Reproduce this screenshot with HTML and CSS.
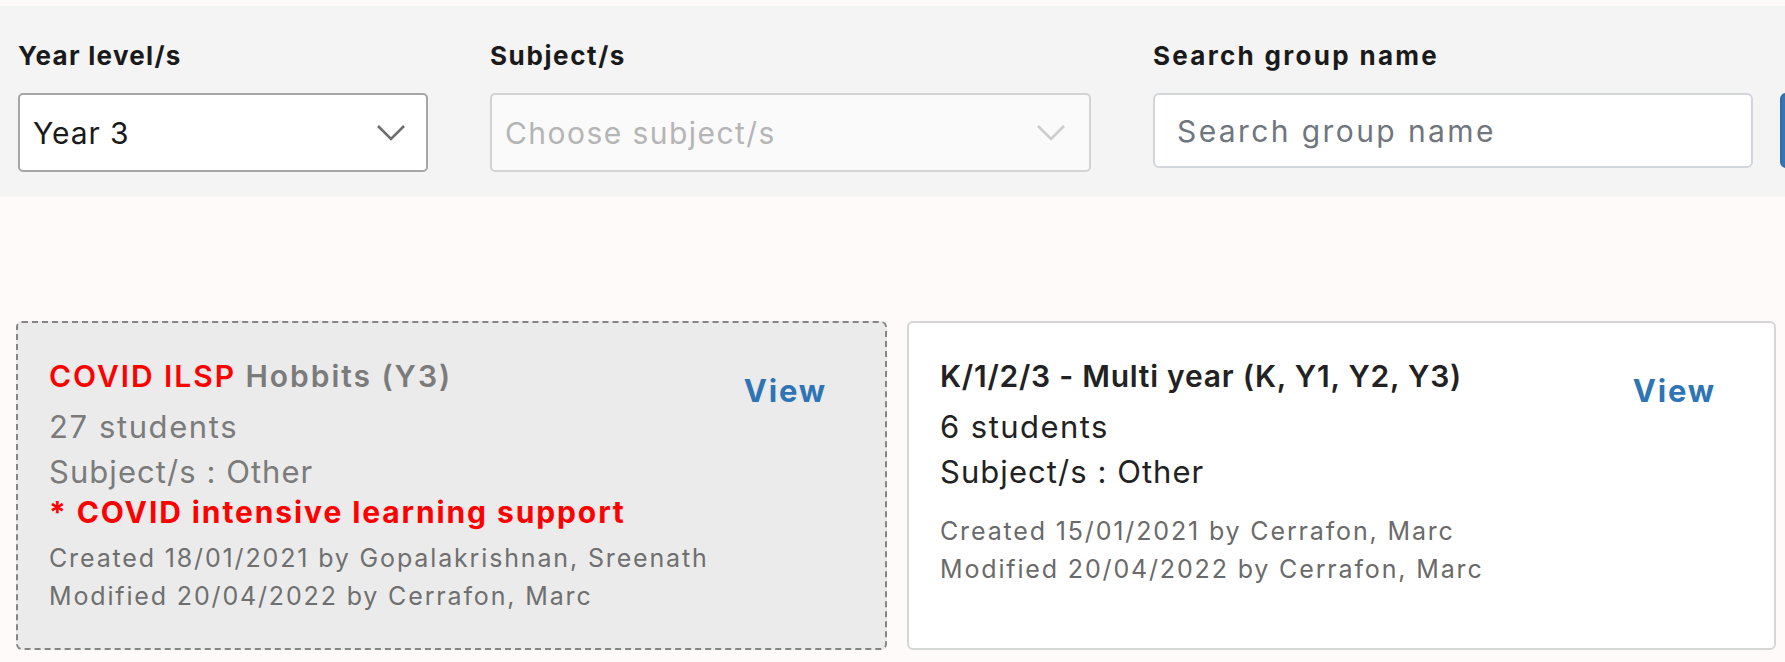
FILE: index.html
```html
<!DOCTYPE html>
<html lang="en">
<head>
<meta charset="utf-8">
<title>Groups</title>
<link rel="stylesheet" href="styles.css">
</head>
<body>
<section class="filters">
  <div class="field field-year">
    <label class="label ls-year">Year level/s</label>
    <div class="select">
      <span class="select-value">Year 3</span>
      <svg class="chev" width="30" height="18" viewBox="0 0 30 18"><polyline points="2,2 15,15 28,2" fill="none" stroke="#6d6d6d" stroke-width="2.6"/></svg>
    </div>
  </div>
  <div class="field field-subject">
    <label class="label ls-subject">Subject/s</label>
    <div class="select select-disabled">
      <span class="select-placeholder">Choose subject/s</span>
      <svg class="chev" width="30" height="18" viewBox="0 0 30 18"><polyline points="2,2 15,15 28,2" fill="none" stroke="#cdcdcd" stroke-width="2.6"/></svg>
    </div>
  </div>
  <div class="field field-search">
    <label class="label ls-search">Search group name</label>
    <div class="search-row">
      <div class="input"><span class="input-placeholder">Search group name</span></div>
      <div class="btn"></div>
    </div>
  </div>
</section>

<main class="cards">
  <article class="card card-covid">
    <div class="card-body">
      <h3 class="card-title title-covid"><span class="red">COVID ILSP</span> Hobbits (Y3)</h3>
      <p class="big ls-27">27 students</p>
      <p class="big ls-subj">Subject/s : Other</p>
      <p class="covid-note">* COVID intensive learning support</p>
      <p class="meta meta-first">Created 18/01/2021 by Gopalakrishnan, Sreenath</p>
      <p class="meta">Modified 20/04/2022 by Cerrafon, Marc</p>
    </div>
    <a class="view">View</a>
  </article>
  <article class="card card-normal">
    <div class="card-body">
      <h3 class="card-title title-multi">K/1/2/3 - Multi year (K, Y1, Y2, Y3)</h3>
      <p class="big ls-6">6 students</p>
      <p class="big ls-subj">Subject/s : Other</p>
      <p class="meta meta-gap">Created 15/01/2021 by Cerrafon, Marc</p>
      <p class="meta">Modified 20/04/2022 by Cerrafon, Marc</p>
    </div>
    <a class="view">View</a>
  </article>
</main>
</body>
</html>
```

FILE: styles.css
```css
html, body {
  margin: 0;
  padding: 0;
}
body {
  background: #fefaf9;
  font-family: "Inter", "Open Sans", "Liberation Sans", sans-serif;
  color: #1f1f1f;
  width: 1785px;
  height: 662px;
  overflow: hidden;
}

/* ---------- filter bar ---------- */
.filters {
  margin-top: 6px;
  height: 191px;
  box-sizing: border-box;
  background: #f4f4f4;
  display: flex;
  padding: 36px 0 0 18px;
  gap: 62px;
  overflow: hidden;
}
.field {
  display: flex;
  flex-direction: column;
  flex-shrink: 0;
}
.field-year { width: 410px; }
.field-subject { width: 601px; }
.field-search { width: 720px; }

.label {
  font-weight: 700;
  font-size: 26px;
  line-height: 28px;
  height: 28px;
  margin-bottom: 23px;
  color: #1a1a1a;
  white-space: nowrap;
}
.ls-year { letter-spacing: 1.3px; }
.ls-subject { letter-spacing: 1.6px; }
.ls-search { letter-spacing: 2.3px; }

.select {
  height: 79px;
  box-sizing: border-box;
  border: 2px solid #a6a6a6;
  border-radius: 5px;
  background: #ffffff;
  display: flex;
  align-items: center;
  justify-content: space-between;
  padding: 0 20px 0 13px;
}
.select-disabled {
  background: #fafafa;
  border-color: #d3d3d3;
  padding: 0 23px 0 13px;
}
.select-value {
  font-size: 30px;
  letter-spacing: 0.9px;
  color: #1a1a1a;
}
.select-placeholder {
  font-size: 30px;
  letter-spacing: 1.45px;
  color: #b5b5b5;
}
.chev { display: block; }

.search-row {
  display: flex;
  gap: 27px;
}
.input {
  width: 600px;
  height: 75px;
  flex-shrink: 0;
  box-sizing: border-box;
  border: 2px solid #d2d6da;
  border-radius: 6px;
  background: #ffffff;
  display: flex;
  align-items: center;
  padding-left: 22px;
}
.input-placeholder {
  font-size: 30px;
  letter-spacing: 2.4px;
  color: #6f767d;
  white-space: nowrap;
}
.btn {
  width: 60px;
  height: 75px;
  flex-shrink: 0;
  box-sizing: border-box;
  border: 2px solid #2f6fb0;
  border-radius: 6px;
  background: #3775b8;
}

/* ---------- cards ---------- */
.cards {
  display: flex;
  gap: 20px;
  padding: 124px 0 0 16px;
}
.card {
  height: 329px;
  flex-shrink: 0;
  box-sizing: border-box;
  border-radius: 6px;
  display: flex;
  align-items: flex-start;
  justify-content: space-between;
  padding: 33px 58px 0 31px;
}
.card-covid {
  width: 871px;
  background: #ebebeb;
  border: 2px dashed #858585;
  color: #7b7b7b;
}
.card-normal {
  width: 869px;
  background: #ffffff;
  border: 2px solid #d6d6d6;
  color: #222222;
}
.card-body p,
.card-body .card-title {
  margin: 0;
  white-space: nowrap;
}
.card-body .card-title {
  font-size: 30px;
  font-weight: 600;
  line-height: 40px;
  margin-bottom: 8px;
}
.title-covid { letter-spacing: 1.95px; color: #7b7b7b; }
.title-multi { letter-spacing: 0.75px; }
.red { color: #ff0000; }
.big {
  font-size: 31px;
  line-height: 45px;
}
.ls-27 { letter-spacing: 1.6px; }
.ls-6 { letter-spacing: 1.45px; }
.ls-subj { letter-spacing: 1.05px; }
.covid-note {
  color: #ff0000;
  font-weight: 700;
  font-size: 30px;
  line-height: 37px;
  letter-spacing: 1.9px;
}
.meta {
  font-size: 25px;
  line-height: 38px;
  letter-spacing: 1.85px;
  color: #6a6a6a;
}
.card-covid .meta { color: #6f6f6f; }
.card-body .meta-first { margin-top: 8px; }
.card-body .meta-gap { margin-top: 18px; }
.view {
  font-size: 31px;
  font-weight: 700;
  letter-spacing: 1.8px;
  color: #2f75b5;
  margin-top: 15px;
  line-height: 40px;
  height: 40px;
}
```
